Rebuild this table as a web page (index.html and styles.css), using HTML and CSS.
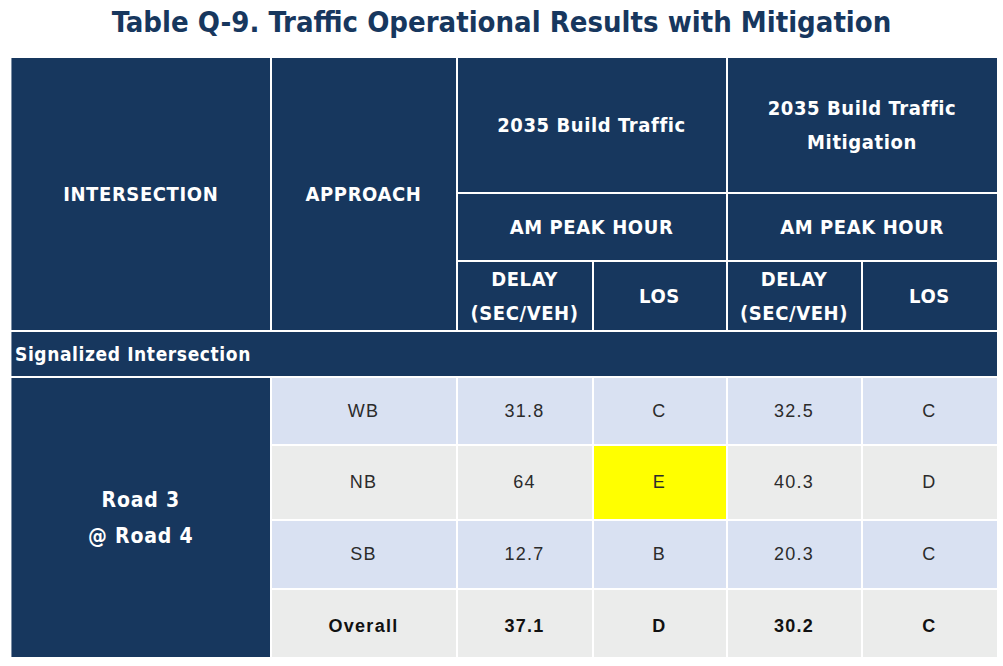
FILE: index.html
```html
<!DOCTYPE html>
<html>
<head>
<meta charset="utf-8">
<link rel="stylesheet" href="styles.css">
</head>
<body>
<h1 class="title">Table Q-9. Traffic Operational Results with Mitigation</h1>
<table class="tbl">
  <colgroup>
    <col class="c1"><col class="c2"><col class="c3"><col class="c4"><col class="c5"><col class="c6">
  </colgroup>
  <thead>
    <tr class="h1">
      <th rowspan="3">INTERSECTION</th>
      <th rowspan="3">APPROACH</th>
      <th colspan="2">2035 Build Traffic</th>
      <th colspan="2">2035 Build Traffic<br>Mitigation</th>
    </tr>
    <tr class="h2">
      <th colspan="2">AM PEAK HOUR</th>
      <th colspan="2">AM PEAK HOUR</th>
    </tr>
    <tr class="h3">
      <th>DELAY<br>(SEC/VEH)</th>
      <th>LOS</th>
      <th>DELAY<br>(SEC/VEH)</th>
      <th>LOS</th>
    </tr>
  </thead>
  <tbody>
    <tr class="sect">
      <th colspan="6">Signalized Intersection</th>
    </tr>
    <tr class="r1 blue">
      <th rowspan="4" class="name">Road 3<br>@ Road 4</th>
      <td>WB</td><td>31.8</td><td>C</td><td>32.5</td><td>C</td>
    </tr>
    <tr class="r2 gray">
      <td>NB</td><td>64</td><td class="hl">E</td><td>40.3</td><td>D</td>
    </tr>
    <tr class="r3 blue">
      <td>SB</td><td>12.7</td><td>B</td><td>20.3</td><td>C</td>
    </tr>
    <tr class="r4 gray total">
      <td>Overall</td><td>37.1</td><td>D</td><td>30.2</td><td>C</td>
    </tr>
  </tbody>
</table>
</body>
</html>
```
FILE: styles.css
```css
html, body {
  margin: 0;
  padding: 0;
  background: #ffffff;
}
.title {
  margin: 0;
  padding-top: 5px;
  height: 56px;
  box-sizing: border-box;
  text-align: center;
  font-family: "DejaVu Sans Condensed", "Roboto", sans-serif;
  font-weight: bold;
  font-size: 29px;
  line-height: 34px;
  color: #17375e;
}
.tbl {
  margin-left: 11px;
  width: 986px;
  table-layout: fixed;
  border-collapse: collapse;
  border-top: 1px solid #8a9aae;
  border-bottom: 2px solid #c8c8c8;
}
.c1 { width: 259px; }
.c2 { width: 186px; }
.c3 { width: 136px; }
.c4 { width: 134px; }
.c5 { width: 135px; }
.c6 { width: 136px; }
.tbl th, .tbl td {
  border: 2px solid #ffffff;
  padding: 0;
  text-align: center;
  vertical-align: middle;
}
.tbl th {
  background: #17375e;
  color: #ffffff;
  font-family: "DejaVu Sans Condensed", "Roboto", sans-serif;
  font-weight: bold;
  font-size: 20px;
  letter-spacing: 0.6px;
  line-height: 34px;
}
.tbl thead tr > th:first-child { border-left: 1px solid #7d8ea4; }
.h1 { height: 136px; }
.h2 { height: 68px; }
.h3 { height: 69px; }
.sect { height: 46px; }
.sect th {
  text-align: left;
  padding-left: 3px;
  font-size: 19px;
  letter-spacing: 0.6px;
  border-left: 1px solid #7d8ea4;
}
.tbl .name {
  font-size: 21px;
  letter-spacing: 0.8px;
  line-height: 36px;
  border-left: 1px solid #7d8ea4;
}
.tbl td {
  font-family: "Liberation Sans", Arial, sans-serif;
  font-size: 18px;
  letter-spacing: 1.3px;
  color: #2b2b2b;
}
.r1 { height: 68px; }
.r2 { height: 75px; }
.r3 { height: 69px; }
.r4 { height: 69px; }
.blue td { background: #d9e1f2; }
.gray td { background: #ebeceb; }
.tbl td.hl { background: #ffff00; }
.tbl .total td {
  font-weight: bold;
  color: #111111;
  padding-top: 6px;
}
```
